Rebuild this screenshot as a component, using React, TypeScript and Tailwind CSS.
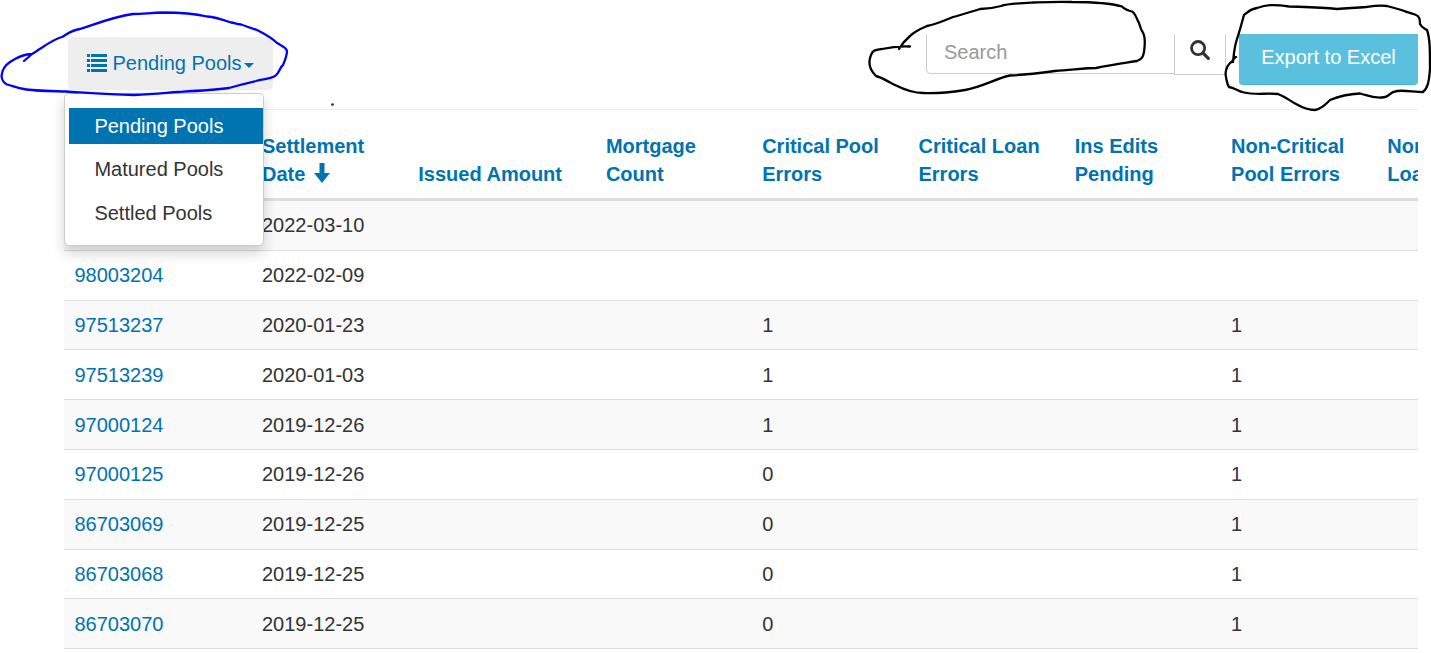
import React from "react";

type Row = { id: string; date: string; critical: string; nonCritical: string };

const rows: Row[] = [
  { id: "", date: "2022-03-10", critical: "", nonCritical: "" },
  { id: "98003204", date: "2022-02-09", critical: "", nonCritical: "" },
  { id: "97513237", date: "2020-01-23", critical: "1", nonCritical: "1" },
  { id: "97513239", date: "2020-01-03", critical: "1", nonCritical: "1" },
  { id: "97000124", date: "2019-12-26", critical: "1", nonCritical: "1" },
  { id: "97000125", date: "2019-12-26", critical: "0", nonCritical: "1" },
  { id: "86703069", date: "2019-12-25", critical: "0", nonCritical: "1" },
  { id: "86703068", date: "2019-12-25", critical: "0", nonCritical: "1" },
  { id: "86703070", date: "2019-12-25", critical: "0", nonCritical: "1" },
];

const columns =
  "grid w-[1480px] grid-cols-[187.6px_156.3px_187.6px_156.3px_156.3px_156.3px_156.3px_156.3px_156.3px]";

function ListIcon() {
  return (
    <svg className="h-[18px] w-5 shrink-0" viewBox="0 0 20 18" fill="currentColor" shapeRendering="crispEdges">
      {[0, 5, 10, 15].map((y) => (
        <g key={y}>
          <rect x="0" y={y} width="3" height="3" />
          <rect x="4" y={y} width="16" height="3" />
        </g>
      ))}
    </svg>
  );
}

function Toolbar() {
  return (
    <div className="flex h-[109px] items-start pr-[13px] pl-[68px]">
      <div className="relative mt-[37px]">
        <button className="flex h-[53px] w-[205px] items-center rounded-[5px] bg-[#eeeeee] pb-[2px] pl-[19px] text-[#0073b1]">
          <ListIcon />
          <span className="ml-[5.5px] whitespace-nowrap">Pending Pools</span>
          <svg className="mt-[5px] ml-[3px] h-[5px] w-[10px] shrink-0" viewBox="0 0 10 5" fill="currentColor">
            <path d="M0 0h10L5 5z" />
          </svg>
        </button>
        <ul className="absolute top-[56px] left-[-4px] z-10 h-[153px] w-[200px] rounded-[5px] border border-[#cccccc] bg-white pt-[14px] pl-1 text-[#333333] shadow-[0_7px_14px_rgba(0,0,0,0.18)]">
          <li className="flex h-9 items-center bg-[#0073b1] pl-[25.4px] text-white">Pending Pools</li>
          <li className="mt-[7px] flex h-9 items-center pl-[25.4px]">Matured Pools</li>
          <li className="mt-2 flex h-9 items-center pl-[25.4px]">Settled Pools</li>
        </ul>
      </div>
      <div className="mt-[34px] ml-auto flex items-start">
        <div className="flex h-10 w-[248px] items-center rounded-bl-[5px] border-b border-l border-[#cccccc] pb-[3px] pl-[17px] text-[#999999]">
          Search
        </div>
        <button className="flex h-[41px] w-[52px] justify-center rounded-br-[3px] border-x border-b border-[#cccccc] pt-[6px] text-[#333333]">
          <svg className="h-5 w-5" viewBox="0 0 20 20" fill="none" stroke="currentColor">
            <circle cx="8.1" cy="8.1" r="6.6" strokeWidth="2.8" />
            <path d="M13 13l5.3 5.3" strokeWidth="3.2" strokeLinecap="round" />
          </svg>
        </button>
        <button className="ml-[13px] flex h-[51px] w-[179px] items-center justify-center rounded-b-[4px] border-b border-[#46b8da] bg-[#5bc0de] pb-1 text-white">
          Export to Excel
        </button>
      </div>
    </div>
  );
}

function HeaderCell({ children }: { children?: React.ReactNode }) {
  return <div className="whitespace-nowrap pl-[10.4px]">{children}</div>;
}

function PoolTable() {
  return (
    <div className="ml-16 w-[1354px] overflow-hidden">
      <div className={`${columns} h-[92px] items-end border-t border-b-3 border-t-[#eeeeee] border-b-[#dddddd] pb-[10px] leading-7 font-bold text-[#0073b1]`}>
        <HeaderCell />
        <HeaderCell>
          Settlement
          <br />
          <span className="flex items-center">
            Date
            <svg className="mb-[3px] ml-[9px] h-5 w-4" viewBox="0 0 16 20" fill="currentColor">
              <path d="M5.5 0h5v10H16l-8 10L0 10h5.5z" />
            </svg>
          </span>
        </HeaderCell>
        <HeaderCell>Issued Amount</HeaderCell>
        <HeaderCell>Mortgage<br />Count</HeaderCell>
        <HeaderCell>Critical Pool<br />Errors</HeaderCell>
        <HeaderCell>Critical Loan<br />Errors</HeaderCell>
        <HeaderCell>Ins Edits<br />Pending</HeaderCell>
        <HeaderCell>Non-Critical<br />Pool Errors</HeaderCell>
        <HeaderCell>Non-Critical<br />Loan Errors</HeaderCell>
      </div>
      {rows.map((row, i) => (
        <div
          key={i}
          className={`${columns} h-[49.8px] items-center border-b border-[#dddddd] text-[#333333] ${i % 2 === 0 ? "bg-[#f9f9f9]" : "bg-white"}`}
        >
          <div className="pl-[10.4px] text-[#0073b1]">{row.id}</div>
          <div className="pl-[10.4px]">{row.date}</div>
          <div />
          <div />
          <div className="pl-[10.4px]">{row.critical}</div>
          <div />
          <div />
          <div className="pl-[10.4px]">{row.nonCritical}</div>
          <div />
        </div>
      ))}
    </div>
  );
}

function PenMarks() {
  return (
    <svg
      className="pointer-events-none absolute top-0 left-0 z-20 h-[120px] w-[1431px]"
      viewBox="0 0 1431 120"
      fill="none"
      strokeWidth="2.3"
      strokeLinecap="round"
      strokeLinejoin="round"
    >
      <path
        stroke="#0000ff"
        d="M32 54C23 54 16 58 10 62C4 66 2 70 1.500 76C2 81 4 83 7 84.500C13 86 18 88 24 89C34 91 50 91 66 91.500C90 93 108 94.500 134 95C154 94 164 93 178 92C195 91 213 90 229 88C239 85 247 83 256 81C264 79 270 79 275 76C280 73 279 68 283 65C285 60 287 56 287 51C286 47 282 46 277 43C272 38 265 34 257 30C250 28 246 26 241 24.500C236 24 235 23 231 22.500C221 19 214 17 207 16.500C194 13.500 179 12.500 163 12.500C149 13 143 14 133 14C112 17 93 25 80 29C72 30 67 34 62 37C53 39 42 48 32 54L24 61"
      />
      <path
        stroke="#000000"
        d="M910 46.500C899 46 891 47 882 49C875 50 873 50 871 55C868 62 869 69 876 76C881 77 889 82 895 85C907 91 915 93 923 93C939 94 952 92 965 90C982 87 997 78 1010 75.500C1025 75 1040 73 1055 71C1071 70 1087 68 1096 68C1112 65 1125 63 1137 61C1142 59 1143 57 1144 52C1145 45 1146 36 1142 31C1140 28 1140 24 1138 21C1136 17 1135 13 1132 11.500C1128 10.500 1124 9 1122 6.500C1110 3 1088 2 1072 2C1057 1.500 1047 2 1034 2.500C1023 3 1008 3.500 1001 6C994 8 986 9 980 9C970 12 961 15 953 17C943 21 937 24 927 26C920 29 914 32 910 36C904 41 902 44 899 49"
      />
      <path
        stroke="#000000"
        d="M1236 57C1232 59 1234 61 1230 63C1226 67 1225 73 1226 77C1227 82 1227 84 1229 87C1235 88 1237 91 1244 92.500C1254 95 1266 93 1278 94C1286 97 1290 101 1296 104C1303 108 1308 110 1315 110C1322 109 1326 104 1330 100C1337 97 1349 94 1360 93.500C1367 95 1371 98 1381 97.500C1390 98 1388 92 1397 91C1405 90 1414 92 1423 92C1428 88 1429 81 1430 69C1430 51 1430 38 1427 30C1424 28 1422 28 1420 24C1420 20 1420 16 1415 14.500C1404 11 1396 8 1387 6C1379 5 1373 6 1366 7C1355 8 1348 8 1337 9C1320 7 1304 7 1289 6.500C1272 4 1266 5 1257 8C1250 9 1248 12 1244 15C1242 22 1240 30 1237 39C1234 48 1234 54 1233 62"
      />
      <circle cx="332.500" cy="104.500" r="1.300" fill="#222222" />
    </svg>
  );
}

export default function App() {
  return (
    <main className="relative h-[653px] w-[1431px] overflow-hidden bg-white font-['Liberation_Sans',Arial,sans-serif] text-[20px] leading-7">
      <Toolbar />
      <PoolTable />
      <PenMarks />
    </main>
  );
}
